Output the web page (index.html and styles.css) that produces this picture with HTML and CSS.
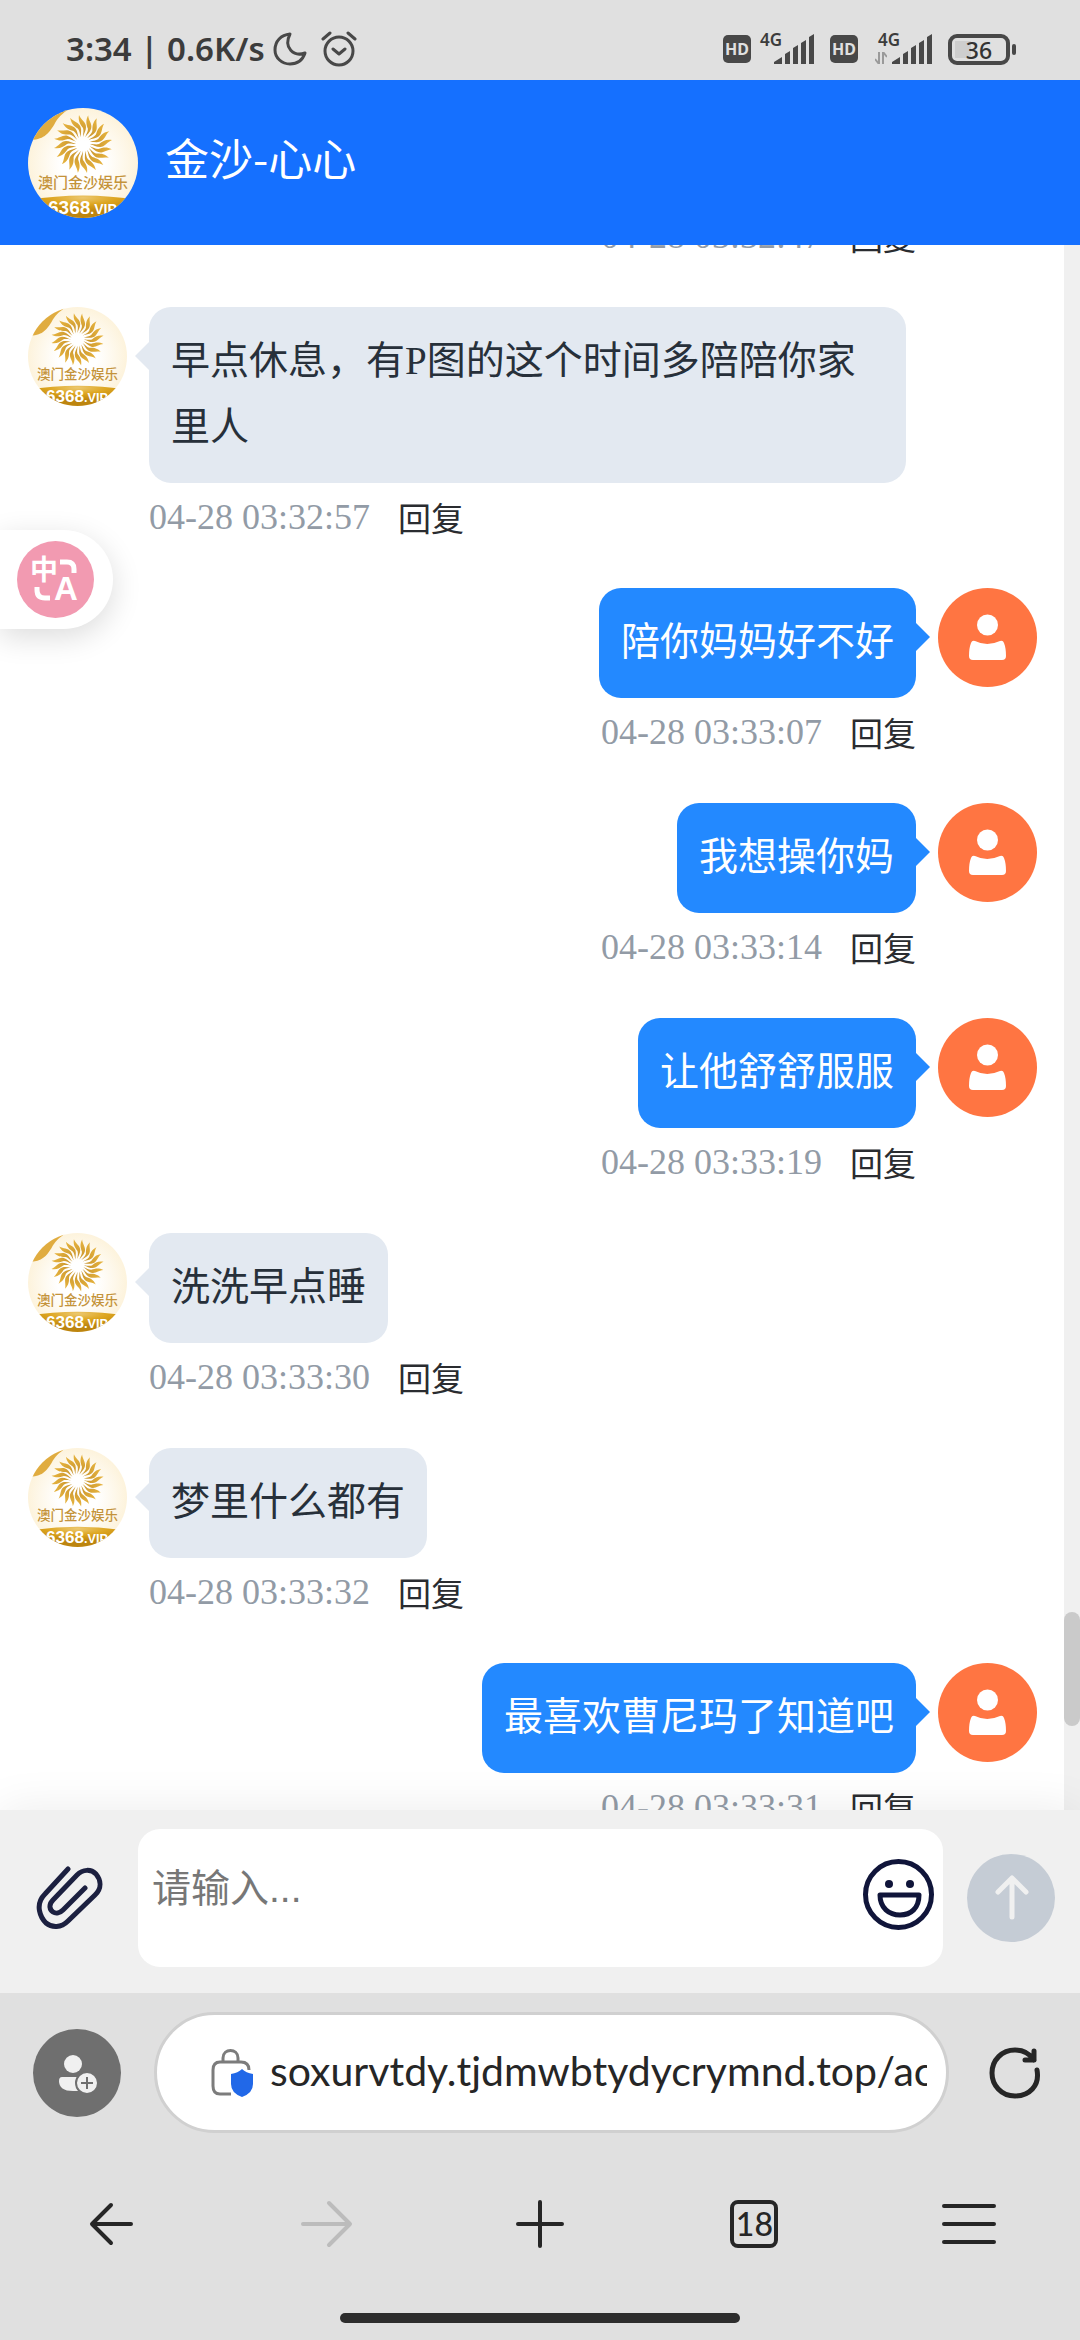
FILE: index.html
```html
<!DOCTYPE html>
<html lang="zh-CN">
<head>
    <meta charset="UTF-8">
    <meta name="viewport" content="width=device-width, initial-scale=1.0">
    <title>金沙-心心</title>
    <link rel="stylesheet" href="styles.css">
</head>
<body>

    <!-- shared drawings -->
    <svg class="defs" aria-hidden="true">
        <defs>
            <linearGradient id="gold" x1="0" y1="0" x2="0" y2="1">
                <stop offset="0" stop-color="#e8b53f"/>
                <stop offset="1" stop-color="#c6922c"/>
            </linearGradient>
            <radialGradient id="band" cx="0.5" cy="0.1" r="0.6">
                <stop offset="0" stop-color="#ecc870"/>
                <stop offset="0.5" stop-color="#dda51f"/>
                <stop offset="1" stop-color="#bd850f"/>
            </radialGradient>
            <radialGradient id="cream">
                <stop offset="0.4" stop-color="#ffffff"/>
                <stop offset="1" stop-color="#fdf3dc"/>
            </radialGradient>
            <clipPath id="round"><circle cx="55" cy="55" r="55"/></clipPath>
            <path id="petal" d="M0 -7 C0 -11 1 -13 0 -16 C-3 -20 -5 -23 -4 -29 C-2 -24 3 -22 3 -17 C3 -13 1 -11 0 -7 Z"/>
            <g id="petals4">
                <use href="#petal"/>
                <use href="#petal" transform="rotate(18)"/>
                <use href="#petal" transform="rotate(36)"/>
                <use href="#petal" transform="rotate(54)"/>
            </g>
        </defs>
        <symbol id="logo" viewBox="0 0 110 110">
            <g clip-path="url(#round)">
                <rect width="110" height="110" fill="url(#cream)"/>
                <path d="M0 32 C16 32 20 26 26 17 C30 9 34 6 42 0 L0 0 Z" fill="#e0ac40"/>
                <g transform="translate(55 36)" fill="url(#gold)">
                    <use href="#petals4"/>
                    <use href="#petals4" transform="rotate(72)"/>
                    <use href="#petals4" transform="rotate(144)"/>
                    <use href="#petals4" transform="rotate(216)"/>
                    <use href="#petals4" transform="rotate(288)"/>
                </g>
                <text class="logo-name" x="55" y="80" text-anchor="middle">澳门金沙娱乐</text>
                <path d="M0 92 Q55 83 110 92 V110 H0 Z" fill="url(#band)"/>
                <text class="logo-site" x="20" y="106">6368<tspan class="logo-vip">.VIP</tspan></text>
            </g>
        </symbol>
        <symbol id="person" viewBox="0 0 99 99">
            <circle cx="49.500" cy="49.500" r="49.500" fill="#ff7542"/>
            <circle cx="49.500" cy="37" r="10.500" fill="#fff"/>
            <path d="M37 53 Q49 59 62 53 Q65 52 66 55 Q68 60 68 68 Q68 72 64 72 H35 Q31 72 31 68 Q31 60 33 55 Q34 52 37 53 Z" fill="#fff"/>
        </symbol>
        <symbol id="hd" viewBox="0 0 28 28">
            <rect width="28" height="28" rx="5" fill="#484848"/>
            <text class="hd-text" x="14" y="20" text-anchor="middle">HD</text>
        </symbol>
        <symbol id="bars" viewBox="0 0 40 30">
            <path d="M0 30 V28 L8 23 V30 Z M11 30 V20 L16 17 V30 Z M19 30 V14 L24 11 V30 Z M27 30 V9 L32 6 V30 Z M35 30 V3 L40 0 V30 Z" fill="#484848"/>
        </symbol>
    </svg>

    <div class="statusbar">
        <span class="clock">3:34 | 0.6K/s</span>
        <svg class="moon" viewBox="0 0 34 34"><path d="M17 2 C8 3 2 9 2 18 C2 26 9 32 17 32 C25 32 30 27 32 21 C21 25 10 16 17 2 Z"/></svg>
        <svg class="alarm" viewBox="0 0 36 36"><circle cx="18" cy="20" r="14"/><path d="M12 18 L18 23 L24 18 M2 8 L9 2 M27 2 L34 8"/></svg>
        <div class="status-right">
            <svg class="hd"><use href="#hd"/></svg>
            <span class="signal"><span class="net">4G</span><svg class="bars"><use href="#bars"/></svg></span>
            <svg class="hd"><use href="#hd"/></svg>
            <span class="signal"><span class="net">4G</span><svg class="traffic" viewBox="0 0 12 12"><path d="M0 7 L4 12 V0 M8 12 V0 L12 5"/></svg><svg class="bars"><use href="#bars"/></svg></span>
            <span class="battery">36</span>
        </div>
    </div>

    <header class="header">
        <svg class="header-logo"><use href="#logo"/></svg>
        <h1>金沙-心心</h1>
    </header>

    <main class="chat">
        <div class="messages">
            <div class="row mine">
                <div class="body">
                    <div class="meta"><time>04-28 03:32:47</time><button>回复</button></div>
                </div>
                <div class="avatar"></div>
            </div>

            <div class="row">
                <svg class="avatar"><use href="#logo"/></svg>
                <div class="body">
                    <p class="bubble">早点休息，有P图的这个时间多陪陪你家里人</p>
                    <div class="meta"><time>04-28 03:32:57</time><button>回复</button></div>
                </div>
            </div>

            <div class="row mine">
                <div class="body">
                    <p class="bubble">陪你妈妈好不好</p>
                    <div class="meta"><time>04-28 03:33:07</time><button>回复</button></div>
                </div>
                <svg class="avatar"><use href="#person"/></svg>
            </div>

            <div class="row mine">
                <div class="body">
                    <p class="bubble">我想操你妈</p>
                    <div class="meta"><time>04-28 03:33:14</time><button>回复</button></div>
                </div>
                <svg class="avatar"><use href="#person"/></svg>
            </div>

            <div class="row mine">
                <div class="body">
                    <p class="bubble">让他舒舒服服</p>
                    <div class="meta"><time>04-28 03:33:19</time><button>回复</button></div>
                </div>
                <svg class="avatar"><use href="#person"/></svg>
            </div>

            <div class="row">
                <svg class="avatar"><use href="#logo"/></svg>
                <div class="body">
                    <p class="bubble">洗洗早点睡</p>
                    <div class="meta"><time>04-28 03:33:30</time><button>回复</button></div>
                </div>
            </div>

            <div class="row">
                <svg class="avatar"><use href="#logo"/></svg>
                <div class="body">
                    <p class="bubble">梦里什么都有</p>
                    <div class="meta"><time>04-28 03:33:32</time><button>回复</button></div>
                </div>
            </div>

            <div class="row mine">
                <div class="body">
                    <p class="bubble">最喜欢曹尼玛了知道吧</p>
                    <div class="meta"><time>04-28 03:33:31</time><button>回复</button></div>
                </div>
                <svg class="avatar"><use href="#person"/></svg>
            </div>
        </div>
        <div class="scrollbar"><div class="thumb"></div></div>
    </main>

    <form class="composer">
        <button type="button" class="attach" aria-label="附件">
            <svg viewBox="0 0 68 64"><path d="M33 3 L10 28 C-1 39 6 52 11 57 C17 62 26 62 33 55 L60 29 C67 22 66 14 61 8 C56 3 48 3 42 9 L18 34 C13 39 15 44 18 46 C21 48 25 47 28 44 L50 22"/></svg>
        </button>
        <div class="field">
            <textarea aria-label="消息" placeholder="请输入..." rows="1"></textarea>
            <button type="button" class="emoji" aria-label="表情">
                <svg viewBox="0 0 71 71">
                    <circle cx="35.500" cy="35.500" r="33"/>
                    <path d="M17 36 H56 C56 49 48 56 37 56 C26 56 17 49 17 36 Z"/>
                    <circle class="eye" cx="26" cy="25" r="4"/>
                    <circle class="eye" cx="47" cy="25" r="4"/>
                </svg>
            </button>
        </div>
        <button type="button" class="send" aria-label="发送">
            <svg viewBox="0 0 88 88"><path d="M45 63 V25 M31 38 L45 24 L59 38"/></svg>
        </button>
    </form>

    <footer class="browser">
        <div class="address">
            <button class="profile" aria-label="账户">
                <svg viewBox="0 0 88 88">
                    <circle cx="40" cy="35" r="9"/>
                    <path d="M29 48 H50 V62 H40 Q26 62 26 52 Q26 48 29 48 Z"/>
                    <circle class="plus" cx="54" cy="54" r="11"/>
                    <path class="cross" d="M48 54 H60 M54 48 V60"/>
                </svg>
            </button>
            <div class="urlbox">
                <svg class="lock" viewBox="0 0 44 48">
                    <path class="outline" d="M12 13 V9 C12 -1 27 -1 27 9 V13 M38 21 Q38 13 30 13 H9 Q2 13 2 21 V37 Q2 45 9 45 H20"/>
                    <path d="M31 20 Q35 24 42 25 V35 Q42 44 31 48 Q20 44 20 35 V25 Q27 24 31 20 Z" fill="#2168e8"/>
                </svg>
                <input type="text" aria-label="网址" value="soxurvtdy.tjdmwbtydycrymnd.top/ac">
            </div>
            <button class="reload" aria-label="刷新">
                <svg viewBox="0 0 52 52"><path d="M48 23 C51 39 40 49 26 49 C12 49 3 38 3 26 C3 13 13 3 26 3 C34 3 41 7 45 13 M45 4 V13 H36"/></svg>
            </button>
        </div>
        <nav class="toolbar">
            <button aria-label="后退"><svg viewBox="0 0 56 56"><path d="M28 9 L9 28 L28 47 M10 28 H48"/></svg></button>
            <button aria-label="前进" disabled><svg viewBox="0 0 56 56"><path d="M31 7 L52 28 L31 49 M5 28 H51"/></svg></button>
            <button aria-label="新标签页"><svg viewBox="0 0 56 56"><path d="M28 6 V50 M6 28 H50"/></svg></button>
            <button aria-label="标签页"><span class="tabs">18</span></button>
            <button aria-label="菜单"><svg viewBox="0 0 56 56"><path d="M3 10 H53 M3 28 H53 M3 46 H53"/></svg></button>
        </nav>
        <div class="home"></div>
    </footer>

    <!-- floats over the chat -->
    <button class="translate" aria-label="翻译">
        <svg viewBox="0 0 77 77">
            <circle cx="38.500" cy="38.500" r="38.500" fill="#f29ab1"/>
            <text class="zh" x="27" y="39" text-anchor="middle">中</text>
            <text class="en" x="49" y="59" text-anchor="middle">A</text>
            <path d="M43 21 H50 Q57 21 57 28 V32 M20 46 V49 Q20 57 28 57 H33"/>
        </svg>
    </button>

</body>
</html>
```

FILE: styles.css
```css
* {
    box-sizing: border-box;
}

body {
    margin: 0;
    height: 100vh;
    display: flex;
    flex-direction: column;
    overflow: hidden;
    background: #fff;
    font-family: "Liberation Serif", "Noto Sans CJK SC", serif;
    color: #27303a;
}

button {
    margin: 0;
    padding: 0;
    border: none;
    background: none;
    display: flex;
    align-items: center;
    justify-content: center;
}

svg {
    display: block;
    flex: none;
}

.defs {
    position: absolute;
    width: 0;
    height: 0;
}

/* status bar */
.statusbar {
    display: flex;
    align-items: center;
    height: 80px;
    padding: 18px 70px 0 66px;
    background: #e0e0e0;
    color: #3c3c3c;
    font-family: "Noto Sans", sans-serif;
}

.clock {
    font-size: 33px;
    font-weight: 600;
    line-height: 40px;
    white-space: pre;
}

.moon,
.alarm {
    width: 34px;
    height: 34px;
    margin-left: 8px;
    fill: none;
    stroke: #484848;
    stroke-width: 3;
    stroke-linecap: round;
    stroke-linejoin: round;
}

.alarm {
    width: 36px;
    height: 36px;
    margin-left: 14px;
}

.status-right {
    display: flex;
    align-items: center;
    margin-left: auto;
}

.hd {
    width: 28px;
    height: 28px;
}

.hd-text {
    font: bold 16px "Noto Sans", sans-serif;
    fill: #e0e0e0;
}

.signal {
    display: flex;
    align-items: flex-end;
    justify-content: flex-end;
    position: relative;
    width: 54px;
    height: 30px;
    margin: 0 16px 0 9px;
}

.signal:has(.traffic) {
    width: 58px;
    margin-left: 16px;
}

.net {
    position: absolute;
    left: 0;
    top: -4px;
    font-size: 17px;
    font-weight: 600;
    line-height: 20px;
}

.signal:has(.traffic) .net {
    left: 4px;
}

.traffic {
    width: 12px;
    height: 12px;
    margin-right: 5px;
    fill: none;
    stroke: #9a9a9a;
    stroke-width: 2;
}

.bars {
    width: 40px;
    height: 30px;
}

.battery {
    position: relative;
    width: 62px;
    height: 31px;
    border: 4px solid #484848;
    border-radius: 9px;
    background: linear-gradient(#cecece, #cecece) 3px 3px / 16px 17px no-repeat;
    font-size: 23px;
    font-weight: 500;
    line-height: 24px;
    text-align: center;
    color: #333;
}

.battery::after {
    content: "";
    position: absolute;
    right: -10px;
    top: 6px;
    width: 4px;
    height: 11px;
    border-radius: 2px;
    background: #484848;
}

/* header */
.header {
    display: flex;
    align-items: center;
    gap: 27px;
    height: 165px;
    padding: 0 28px;
    background: #1570ff;
    color: #fff;
}

.header-logo {
    width: 110px;
    height: 110px;
}

.header h1 {
    margin: 0;
    padding-bottom: 12px;
    font-family: "Noto Sans CJK SC", sans-serif;
    font-size: 44px;
    font-weight: 400;
    line-height: 66px;
}

.logo-name {
    font: 500 15px "Noto Sans CJK SC", sans-serif;
    fill: #c4933a;
}

.logo-site {
    font: bold 19px "Liberation Sans", sans-serif;
    fill: #fff;
}

.logo-vip {
    font-size: 14px;
}

/* chat */
.chat {
    flex: 1;
    min-height: 0;
    display: flex;
    overflow: hidden;
}

.messages {
    flex: 1;
    margin-top: -29px;
    padding: 0 27px 0 28px;
}

.row {
    display: flex;
    gap: 22px;
    margin-bottom: 51px;
}

.mine {
    justify-content: flex-end;
}

.avatar {
    flex: none;
    width: 99px;
    height: 99px;
}

div.avatar {
    height: 0;
}

.body {
    display: flex;
    flex-direction: column;
    align-items: flex-start;
    max-width: 75%;
}

.mine .body {
    align-items: flex-end;
}

.bubble {
    position: relative;
    margin: 0 0 14px;
    padding: 21px 22px 23px;
    border-radius: 22px;
    background: #e3e9f1;
    font-size: 39px;
    line-height: 66px;
}

.bubble::before {
    content: "";
    position: absolute;
    top: 35px;
    left: -14px;
    border: 14px solid transparent;
    border-left: none;
    border-right-color: #e3e9f1;
}

.mine .bubble {
    background: #2389ff;
    color: #fff;
}

.mine .bubble::before {
    left: auto;
    right: -14px;
    border: 14px solid transparent;
    border-right: none;
    border-left-color: #2389ff;
}

.meta {
    display: flex;
    align-items: center;
    gap: 28px;
    height: 40px;
    font-size: 36px;
    line-height: 40px;
    color: #929ba6;
}

.meta button {
    font-family: "Noto Sans CJK SC", sans-serif;
    font-size: 33px;
    line-height: 40px;
    color: #2a2c30;
}

.scrollbar {
    display: flex;
    flex-direction: column;
    justify-content: flex-end;
    width: 16px;
    padding-bottom: 84px;
    background: #f0f0f0;
}

.thumb {
    height: 114px;
    border-radius: 8px;
    background: #cacaca;
}

/* composer */
.composer {
    position: relative;
    display: flex;
    align-items: center;
    padding: 19px 25px 26px 35px;
    background: #f0f0f0;
    box-shadow: 0 0 44px rgba(0, 0, 0, 0.08);
}

.attach svg {
    width: 68px;
    height: 64px;
    fill: none;
    stroke: #1c2040;
    stroke-width: 5;
    stroke-linecap: round;
    stroke-linejoin: round;
}

.field {
    flex: 1;
    display: flex;
    align-items: center;
    height: 138px;
    margin: 0 24px 0 35px;
    padding: 0 9px 8px 14px;
    border-radius: 22px;
    background: #fff;
}

.field textarea {
    flex: 1;
    min-width: 0;
    height: 76px;
    padding: 0 0 10px;
    border: none;
    outline: none;
    resize: none;
    overflow: hidden;
    background: none;
    font-family: "Liberation Sans", "Noto Sans CJK SC", sans-serif;
    font-size: 39px;
    line-height: 66px;
}

.field textarea::placeholder {
    color: #777;
}

.emoji svg {
    width: 71px;
    height: 71px;
    fill: none;
    stroke: #10153a;
    stroke-width: 5;
    stroke-linejoin: round;
}

.emoji .eye {
    fill: #10153a;
    stroke: none;
}

.send svg {
    width: 88px;
    height: 88px;
    border-radius: 50%;
    background: #c5ccd5;
    fill: none;
    stroke: #f0f0f0;
    stroke-width: 5;
    stroke-linecap: round;
    stroke-linejoin: round;
}

/* browser bar */
.browser {
    position: relative;
    background: #e0e0e0;
    color: #262626;
    font-family: Lato, sans-serif;
}

.address {
    display: flex;
    align-items: center;
    padding: 19px 39px 0 33px;
}

.profile svg {
    width: 88px;
    height: 88px;
    border-radius: 50%;
    background: #6f6f6f;
    fill: #f0f0f0;
}

.profile .plus {
    stroke: #6f6f6f;
    stroke-width: 2;
}

.profile .cross {
    stroke: #6f6f6f;
    stroke-width: 2;
}

.urlbox {
    flex: 1;
    display: flex;
    align-items: center;
    gap: 15px;
    min-width: 0;
    height: 121px;
    margin: 0 40px 0 33px;
    padding: 0 19px 0 54px;
    border: 3px solid #d0d0d0;
    border-radius: 61px;
    background: #fff;
}

.lock {
    width: 44px;
    height: 48px;
}

.lock .outline {
    fill: none;
    stroke: #7c7c7c;
    stroke-width: 3;
}

.urlbox input {
    flex: 1;
    min-width: 0;
    height: 60px;
    padding: 0 0 4px;
    border: none;
    outline: none;
    background: none;
    font-family: Lato, sans-serif;
    font-size: 41px;
    color: #262626;
}

.reload svg {
    width: 52px;
    height: 52px;
    fill: none;
    stroke: #262626;
    stroke-width: 5;
    stroke-linecap: round;
    stroke-linejoin: round;
}

.toolbar {
    display: grid;
    grid-template-columns: repeat(5, 1fr);
    padding: 63px 4px 0;
}

.toolbar button {
    height: 56px;
    color: #262626;
}

.toolbar button:disabled {
    color: #bcbcbc;
}

.toolbar svg {
    width: 56px;
    height: 56px;
    fill: none;
    stroke: currentColor;
    stroke-width: 4;
    stroke-linecap: round;
    stroke-linejoin: round;
}

.tabs {
    width: 48px;
    height: 48px;
    border: 4px solid #262626;
    border-radius: 8px;
    font: 500 32px/40px Lato, sans-serif;
    text-align: center;
}

.home {
    width: 37%;
    height: 10px;
    margin: 61px auto 17px;
    border-radius: 5px;
    background: #2d2d2d;
}

/* translate float */
.translate {
    position: absolute;
    left: 0;
    top: 530px;
    width: 113px;
    height: 99px;
    padding-right: 2px;
    border-radius: 0 50px 50px 0;
    background: #fff;
    box-shadow: 0 8px 30px rgba(0, 0, 0, 0.14);
}

.translate svg {
    width: 77px;
    height: 77px;
}

.translate path {
    fill: none;
    stroke: #fff;
    stroke-width: 5;
}

.translate .zh {
    font: bold 28px "Noto Sans CJK SC", sans-serif;
    fill: #fff;
}

.translate .en {
    font: bold 33px "Liberation Sans", sans-serif;
    fill: #fff;
}
```
